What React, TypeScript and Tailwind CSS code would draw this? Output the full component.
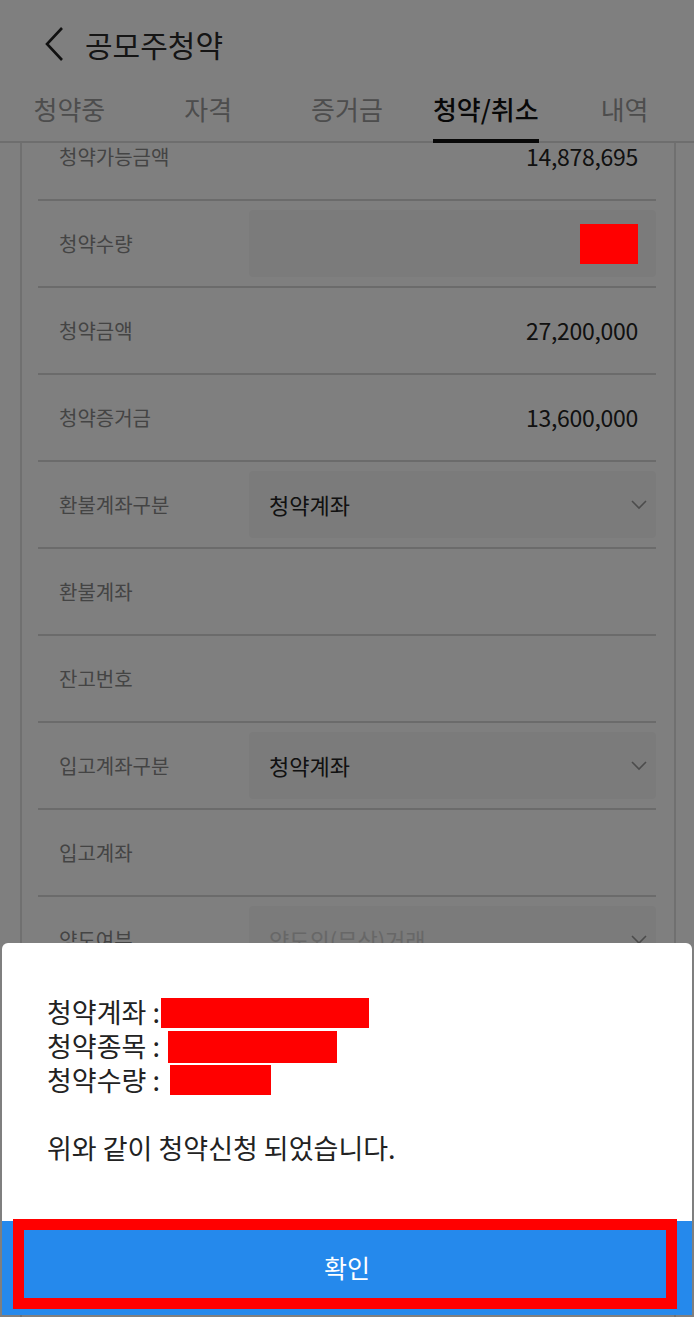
const tabs = ['청약중', '자격', '증거금', '청약/취소', '내역'];

type Row =
  | { label: string; kind: 'text'; value: string }
  | { label: string; kind: 'input' }
  | { label: string; kind: 'select'; value: string; disabled?: boolean }
  | { label: string; kind: 'empty' };

const rows: Row[] = [
  { label: '청약가능금액', kind: 'text', value: '14,878,695' },
  { label: '청약수량', kind: 'input' },
  { label: '청약금액', kind: 'text', value: '27,200,000' },
  { label: '청약증거금', kind: 'text', value: '13,600,000' },
  { label: '환불계좌구분', kind: 'select', value: '청약계좌' },
  { label: '환불계좌', kind: 'empty' },
  { label: '잔고번호', kind: 'empty' },
  { label: '입고계좌구분', kind: 'select', value: '청약계좌' },
  { label: '입고계좌', kind: 'empty' },
  { label: '양도여부', kind: 'select', value: '양도외(무상)거래', disabled: true },
  { label: '', kind: 'empty' },
  { label: '', kind: 'empty' },
  { label: '', kind: 'empty' },
  { label: '', kind: 'empty' },
];

const Chevron = () => (
  <svg width="16" height="10" viewBox="0 0 16 10" fill="none">
    <polyline points="1,1 8,8 15,1" stroke="#999" strokeWidth="1.6" />
  </svg>
);

const FormRow = ({ row }: { row: Row }) => (
  <div className="flex h-[87px] items-center border-b-2 border-[#d6d6d6]">
    <div className="w-[211px] shrink-0 pl-[21px] text-[20px] text-[#888]">{row.label}</div>
    {row.kind === 'text' && (
      <div className="flex-1 pr-[18px] text-right text-[23px] tracking-[-0.3px] text-[#222]">{row.value}</div>
    )}
    {row.kind === 'input' && (
      <div className="flex h-[67px] flex-1 items-center justify-end rounded-[4px] bg-[#f6f6f6] pr-[18px]">
        {/* redaction sits above the dim layer */}
        <div className="relative z-10 h-[40px] w-[58px] bg-[#ff0000]" />
      </div>
    )}
    {row.kind === 'select' && (
      <div className="flex h-[67px] flex-1 items-center justify-between rounded-[4px] bg-[#f6f6f6] pl-[20px] pr-[9px]">
        <span className={`text-[22px] ${row.disabled ? 'text-[#cfcfcf]' : 'text-[#222]'}`}>{row.value}</span>
        <Chevron />
      </div>
    )}
  </div>
);

export default function App() {
  return (
    <div className="relative h-[1317px] w-[694px] overflow-hidden bg-white font-['Noto_Sans_CJK_KR','Noto_Sans',sans-serif]">
      <header className="flex h-[88px] items-center pl-[44px]">
        <svg width="20" height="36" viewBox="0 0 20 36" fill="none">
          <polyline points="18,2 3,18 18,34" stroke="#222" strokeWidth="2.6" />
        </svg>
        <h1 className="ml-[21px] text-[30px] text-[#2a2a2a]">공모주청약</h1>
      </header>

      <nav className="grid h-[55px] grid-cols-5 border-b-2 border-[#dcdcdc]">
        {tabs.map(t => (
          <div key={t} className="flex justify-center">
            {t === '청약/취소' ? (
              <span className="flex h-[55px] items-center border-b-4 border-[#111] pb-[10px] text-[26px] font-medium text-[#111]">
                {t}
              </span>
            ) : (
              <span className="flex h-[55px] items-center pb-[14px] text-[26px] text-[#9a9a9a]">{t}</span>
            )}
          </div>
        ))}
      </nav>

      <div className="h-[1174px] overflow-hidden">
        <div className="-mt-[29px] ml-[20px] mr-[18px] border-x-2 border-[#e0e0e0] pl-[16px] pr-[18px]">
          {rows.map((r, i) => (
            <FormRow key={i} row={r} />
          ))}
        </div>
      </div>

      {/* modal */}
      <div className="absolute inset-0 flex items-end bg-black/50 p-[2px]">
        <div className="w-full overflow-hidden rounded-t-[6px] bg-white">
          <div className="h-[278px] px-[45px] pt-[52px] text-[27px] leading-[34px] text-[#222]">
            <p>
              청약계좌 :<span className="ml-[1px] mt-[3px] inline-block h-[30px] w-[208px] bg-[#ff0000] align-top" />
            </p>
            <p>
              청약종목 :<span className="ml-[8px] mt-[2px] inline-block h-[32px] w-[169px] bg-[#ff0000] align-top" />
            </p>
            <p>
              청약수량 :<span className="ml-[10px] mt-[2px] inline-block h-[30px] w-[101px] bg-[#ff0000] align-top" />
            </p>
            <p className="mt-[34px]">위와 같이 청약신청 되었습니다.</p>
          </div>
          <button className="relative flex h-[94px] w-full items-center justify-center bg-[#2589ec] text-[25px] text-white">
            확인
            <span className="absolute left-[11px] top-[-2px] h-[90px] w-[664px] border-[11px] border-[#ff0000]" />
          </button>
        </div>
      </div>
    </div>
  );
}
